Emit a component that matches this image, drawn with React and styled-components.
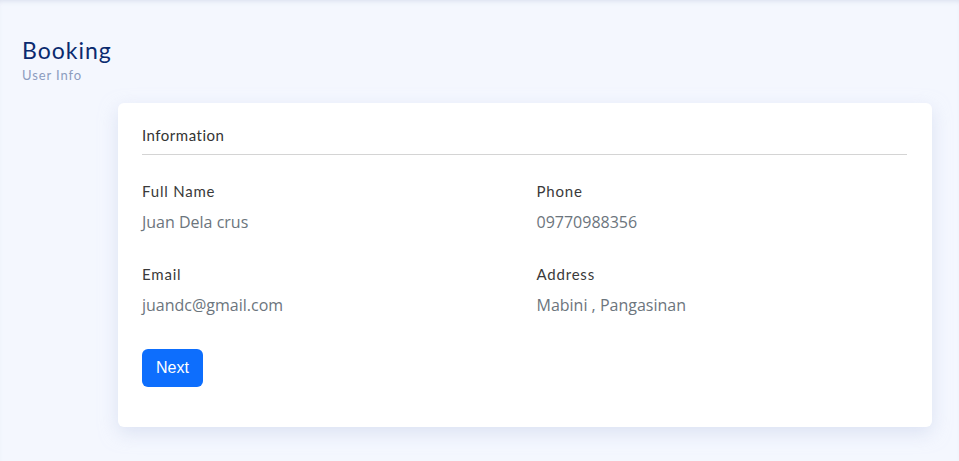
import React from 'react'
import styled, { createGlobalStyle } from 'styled-components'

const GlobalStyle = createGlobalStyle`
  html, body {
    margin: 0;
    padding: 0;
    background: #f4f7fe;
  }
  body {
    font-family: 'Lato', 'Noto Sans', sans-serif;
  }
`

const Page = styled.div`
  min-height: 461px;
  box-sizing: border-box;
  background: #f4f7fe;
  box-shadow: inset 0 4px 5px -3px rgba(180, 190, 215, 0.45);
  padding: 36px 27px 34px 22px;
`

const Title = styled.h1`
  margin: 0;
  font-family: 'Lato', sans-serif;
  font-weight: 400;
  font-size: 23px;
  line-height: 28px;
  letter-spacing: 1px;
  color: #0b2a6f;
`

const Subtitle = styled.div`
  font-family: 'Lato', sans-serif;
  font-size: 13px;
  line-height: 16px;
  letter-spacing: 0.9px;
  color: #8c9cbe;
  margin-top: 3px;
`

const Card = styled.div`
  margin: 20px 0 0 96px;
  background: #fff;
  border-radius: 6px;
  box-shadow: 0 6px 18px rgba(200, 210, 235, 0.55);
  padding: 21px 25px 40px 24px;
`

const CardHeader = styled.div`
  font-family: 'Lato', sans-serif;
  font-size: 15px;
  line-height: 22px;
  letter-spacing: 0.5px;
  color: #333;
  padding-bottom: 8px;
  border-bottom: 1px solid #d4d4d4;
`

const Grid = styled.div`
  display: grid;
  grid-template-columns: 1fr 1fr;
  column-gap: 24px;
  row-gap: 29px;
  margin-top: 25px;
`

const Field = styled.div`
  display: flex;
  flex-direction: column;
  gap: 8px;
`

const Label = styled.div`
  font-family: 'Lato', sans-serif;
  font-size: 15px;
  line-height: 22px;
  letter-spacing: 0.8px;
  color: #3a3a3a;
`

const Value = styled.div`
  font-family: 'Open Sans', sans-serif;
  font-size: 16px;
  line-height: 24px;
  color: #6c757d;
`

const Button = styled.button`
  margin-top: 32px;
  height: 38px;
  width: 61px;
  border: none;
  border-radius: 6px;
  background: #0d6efd;
  color: #fff;
  font-family: 'Liberation Sans', Arial, sans-serif;
  font-size: 16px;
  cursor: pointer;
`

const fields = [
  { label: 'Full Name', value: 'Juan Dela crus' },
  { label: 'Phone', value: '09770988356' },
  { label: 'Email', value: 'juandc@gmail.com' },
  { label: 'Address', value: 'Mabini , Pangasinan' },
]

export default function App () {
  return (
    <>
      <GlobalStyle />
      <Page>
        <Title>Booking</Title>
        <Subtitle>User Info</Subtitle>
        <Card>
          <CardHeader>Information</CardHeader>
          <Grid>
            {fields.map(f => (
              <Field key={f.label}>
                <Label>{f.label}</Label>
                <Value>{f.value}</Value>
              </Field>
            ))}
          </Grid>
          <Button>Next</Button>
        </Card>
      </Page>
    </>
  )
}
